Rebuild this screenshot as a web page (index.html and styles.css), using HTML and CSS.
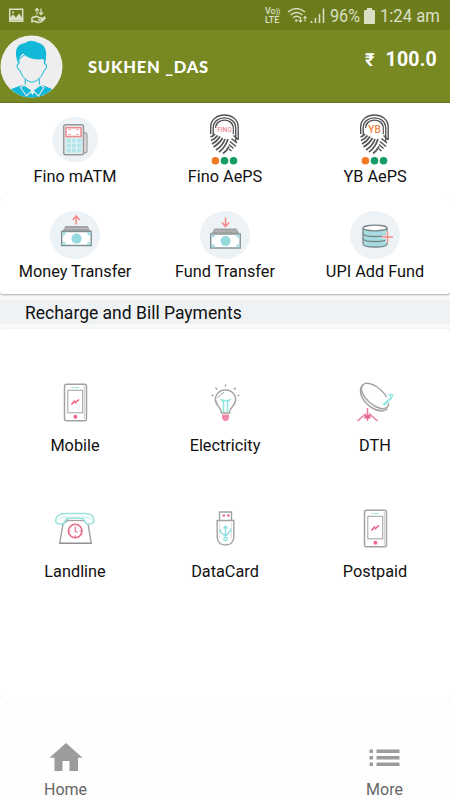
FILE: index.html
```html
<!DOCTYPE html>
<html lang="en">
<head>
<meta charset="utf-8">
<title>Recharge and Bill Payments</title>
<link rel="stylesheet" href="styles.css">
</head>
<body>
<svg class="defs" width="0" height="0">
  <symbol id="phone" viewBox="0 0 48 44">
    <g fill="none" stroke="#a2a2a2"><rect x="13.5" y="3.3" width="22" height="36.5" rx="2" stroke-width="1.5"/><rect x="16.8" y="9.3" width="14.9" height="22.5"/><path d="M33.4 5v33" stroke="#cfcfcf"/></g>
    <path d="M20.5 6.600h1.500m1 0h4.500" stroke="#8ee0da" fill="none"/>
    <path d="M20.500 23.500l3.500-4M24.500 22.500v-1l3.500-3" stroke="#e9587d" stroke-width="1.500" fill="none"/>
    <circle cx="24.400" cy="35.700" r="2" fill="#ed6a8a"/>
  </symbol>
  <symbol id="print" viewBox="0 0 60 58">
    <g fill="none" stroke="#55555a" stroke-width="1.400">
      <path d="M15.700 24v-7c0-16 27.500-16 27.500 0v13"/>
      <path d="M18.200 25v-7c0-13.500 22.500-13.500 22.500 0v14"/>
      <path d="M20.700 18c0-10.500 17.500-10.500 17.500 0v6"/>
      <path d="M15.500 27q3-1 4.500-3M16 30.500q4-1.500 6.500-5M17 34q5-2.500 8-7.500M18.500 37q6-3.500 9-9M21 40q6.500-4 9-11M24 42q6-4 9-13M28 43.500q4-3 6-7" stroke-width="1.700"/>
      <path d="M34 34.500l4.500 4M35 31.500l6 5M36.500 28.500l5.500 4.500M38.500 25.500l4.500 4M34 39l2.500 2" stroke-width="1.500"/>
    </g>
    <rect x="21.500" y="15" width="16" height="10" rx="2" fill="#fff"/>
    <circle cx="20.400" cy="50.700" r="3.800" fill="#f27a22"/><circle cx="29.500" cy="50.700" r="3.800" fill="#159b63"/><circle cx="38.500" cy="50.700" r="3.800" fill="#159b63"/>
  </symbol>
  <symbol id="cash" viewBox="0 0 32 22">
    <path d="M5 1h22l3 5H2z" fill="#a3a3a3"/><path d="M4 3.500h24" stroke="#bbb"/>
    <rect x="1.200" y="6.500" width="29.500" height="14" fill="#fff" stroke="#7e8e91" stroke-width="1.400"/>
    <path d="M2 11V7.200h4q-1 3-4 3.800zm28 0V7.200h-4q1 3 4 3.800zM2 16v3.800h4q-1-3-4-3.800zm28 0v3.800h-4q1-3 4-3.800z" fill="#a8dfe2"/>
    <circle cx="16" cy="13.600" r="5" fill="#96dade"/>
  </symbol>
</svg>

<div class="status">
  <svg class="status-left" width="36" height="20" viewBox="0 0 36 20" fill="none" stroke="#dbe0c5" stroke-width="1.500">
    <path d="M1.700 3.200h13v12h-13z"/><path d="M2 14.500v-3l3-3 3 3 3-4 3 4v3z" fill="#dbe0c5" stroke="none"/><circle cx="5" cy="6.500" r="1" fill="#dbe0c5" stroke="none"/>
    <path d="M29 8.500v-6m-2 2.200l2-2.200 2 2.200M33 2.500v6m-2-2.200l2 2.200 2-2.200" stroke-width="1.200"/>
    <path d="M24 11.300h2q3-2 5 .4h3M30 14h3l4-3.500M24 16.500v-5.200m0 4h3q4 2.500 7.500-.3l3-3.500" stroke-width="1.600"/>
  </svg>
  <div class="volte"><span>Vo<i>))</i></span><span>LTE</span></div>
  <svg class="signal" width="40" height="20" viewBox="0 0 40 20" fill="none" stroke="#dbe0c5" stroke-width="1.500">
    <path d="M1 6q8.500-7 17 0M3.500 9q6-5 12 0M6 11.800q3.500-3 7 0"/><circle cx="9.300" cy="14.500" r="1.200" fill="#dbe0c5" stroke="none"/>
    <path d="M13.500 11v5m-1.700-1.800l1.700 1.800 1.700-1.800M18 15.500v-5m-1.500 1.700l1.500-1.700 1.500 1.700" stroke-width="1.100"/>
    <path d="M24.500 17v-2M28.500 17v-5M32.500 17V8M36.500 17V2.500"/>
  </svg>
  <span class="percent">96%</span>
  <svg class="battery" width="11" height="16" viewBox="0 0 11 16"><path d="M3 0h5v2h2q1 0 1 1v12q0 1-1 1H1q-1 0-1-1V3q0-1 1-1h2z" fill="#dbe0c5"/></svg>
  <span class="clock">1:24 am</span>
</div>

<header class="header">
  <svg class="avatar" width="63" height="63" viewBox="0 0 63 63">
    <circle cx="31.500" cy="31.500" r="31" fill="#eee"/>
    <path d="M11 54.500q4-2.500 12-4.500h18q8 2 11 4.500Q43 62.500 31.500 62.500T11 54.500z" fill="#12b8d7"/>
    <path d="M25 42v7.500L32.500 60l7-10.500V42z" fill="#eee"/>
    <path d="M25.200 44v5.500M39.300 44v5.500" stroke="#12b8d7" fill="none"/>
    <path d="M24 50l-3.500 2.500L26.500 61l6-6 6 6 5.500-8.500L40.500 50l-8 5.500z" fill="#12b8d7" stroke="#eee" stroke-width="1.100"/>
    <path d="M19 24v5q-2-1-2 2 .5 4 3 4.500c2 7 8 11.500 12 11.500s10-4.500 12-11.500q2.500-.5 2.500-4.500 0-3-2-2v-6L31 15z" fill="#eee" stroke="#12b8d7"/>
    <path d="M18 28.500Q11.500 10 25 8q6-4 12.500-.5 12 3 7.500 21-1.500-3-1.500-4.500-13 2-20.500-5.500-4 3-5 10z" fill="#12b8d7"/>
  </svg>
  <h1 class="user">SUKHEN _DAS</h1>
  <div class="balance"><span class="rupee">₹</span><span>100.0</span></div>
</header>

<main>
  <section class="services first">
    <div class="tile">
      <svg width="60" height="58" viewBox="0 0 60 58"><circle cx="30" cy="29.500" r="22.700" fill="#edf2f6"/>
        <path d="M38.500 23h2q1.500 0 1.500 2v16q0 2-3.500 2" fill="#ddd" stroke="#a5a5a5" stroke-width="1.300"/>
        <rect x="18.700" y="14.700" width="19.800" height="30" rx="2" fill="#e2eaed" stroke="#9a9a9a" stroke-width="1.500"/>
        <rect x="21" y="17.700" width="15" height="8.800" fill="#fff" stroke="#ee8a8c" stroke-width="1.500"/><path d="M23 19.700h3m5 0h3M23 24.500h3m5 0h3" stroke="#f3aaa9"/>
        <rect x="21.500" y="28.500" width="15" height="14" fill="#b3e5ea"/><path d="M26.500 28.500v14m5-14v14M21.500 33h15m-15 5h15" stroke="#e4f4f6"/>
      </svg><span>Fino mATM</span></div>
    <div class="tile">
      <svg width="60" height="58" viewBox="0 0 60 58"><use href="#print"/><text class="print-text fino" x="29.500" y="21.500">FINO</text></svg><span>Fino AePS</span></div>
    <div class="tile">
      <svg width="60" height="58" viewBox="0 0 60 58"><use href="#print"/><text class="print-text yb" x="29.500" y="22.500">YB</text></svg><span>YB AePS</span></div>
  </section>

  <section class="services second">
    <div class="tile">
      <svg width="60" height="56" viewBox="0 0 60 56"><ellipse cx="30" cy="28" rx="25" ry="24" fill="#edf2f6"/><use href="#cash" x="15.500" y="18" width="32" height="22"/><path d="M31.200 17.500V9m-3.500 4l3.500-4 3.500 4" fill="none" stroke="#f28b89" stroke-width="1.500"/></svg><span>Money Transfer</span></div>
    <div class="tile">
      <svg width="60" height="56" viewBox="0 0 60 56"><ellipse cx="30" cy="28" rx="25" ry="24" fill="#edf2f6"/><use href="#cash" x="14.500" y="20.500" width="32" height="22"/><path d="M30.500 10.500v9m-3.500-4l3.500 4 3.500-4" fill="none" stroke="#f28b89" stroke-width="1.500"/></svg><span>Fund Transfer</span></div>
    <div class="tile">
      <svg width="60" height="56" viewBox="0 0 60 56"><ellipse cx="30" cy="28" rx="25" ry="24" fill="#edf2f6"/>
        <path d="M18 21v16c0 4 24 4 24 0V21" fill="#a6dce0" stroke="#7b8689" stroke-width="1.300"/><path d="M18 26.500c0 4 24 4 24 0M18 31.500c0 4 24 4 24 0" fill="none" stroke="#7b8689" stroke-width="1.300"/>
        <ellipse cx="30" cy="21" rx="12" ry="2.800" fill="#fff" stroke="#7b8689" stroke-width="1.300"/>
        <path d="M37 30h11m-5.500-5.500v11" stroke="#edf2f6" stroke-width="3.500"/><path d="M37 30h11m-5.500-5.500v11" stroke="#f28b89" stroke-width="1.400"/></svg><span>UPI Add Fund</span></div>
  </section>

  <h2 class="band">Recharge and Bill Payments</h2>

  <section class="bills">
    <div class="tile"><svg width="48" height="44"><use href="#phone"/></svg><span>Mobile</span></div>
    <div class="tile"><svg width="48" height="44" viewBox="0 0 48 44" fill="none">
      <path d="M20.500 32q0-3.500-3-6.500c-7-8-1-16.500 7-16.500s14 8.500 7 16.500q-3 3-3 6.500z" stroke="#a2a2a2" stroke-width="1.500"/><path d="M17 17q2-4.500 6-5.500m-7 8v2" stroke="#aaa"/>
      <path d="M10.500 14l2 .8M14.500 6.800l1.500 1.700M24.500 3.500v2M34.500 6.800L33 8.500M38.500 14l-2 .8" stroke="#999" stroke-width="1.300"/>
      <path d="M22.500 31V21l-2-2 4.500.8 3.500-.8-2 2v10" stroke="#8ee7df" stroke-width="1.500"/><path d="M21 33.500h7v4l-2 2.500h-3l-2-2.500z" fill="#f48dac"/><path d="M21.500 35.500h6" stroke="#e37f9f"/>
    </svg><span>Electricity</span></div>
    <div class="tile"><svg width="48" height="44" viewBox="0 0 48 44" fill="none">
      <path d="M12 4c-6 5-.5 17 8.500 22.500q10 6 16 1.500" stroke="#a2a2a2" stroke-width="1.500"/><ellipse cx="24" cy="15" rx="16.500" ry="8.500" transform="rotate(42 24 15)" stroke="#a2a2a2" stroke-width="1.400"/>
      <path d="M33.500 22.500l6-7" stroke="#fff" stroke-width="5"/><path d="M32 23.500l7.500-6.500v-3l-3-.5M33 24.500l7-7 2-3.500-3-1" stroke="#8ee7e3" stroke-width="1.200"/>
      <path d="M16.500 27v13M15 32.500L6.500 40M18 32.500l8.500 7.500" stroke="#ea7d9e" stroke-width="1.500"/><path d="M14 34h5.500v3.500H13z" fill="#e86c91"/>
    </svg><span>DTH</span></div>
    <div class="tile"><svg width="48" height="44" viewBox="0 0 48 44" fill="none">
      <path d="M16 12v2l-4 3-3 17.500M33 12v2l4 3 3 17.500" stroke="#a2a2a2" stroke-width="1.400"/><path d="M9 34.500v1.700h31v-1.700" stroke="#909090" stroke-width="1.600"/><path d="M16 13.500h17" stroke="#a2a2a2" stroke-width="1.300"/>
      <path d="M16 11.500l-3.500 5q-5 1.500-7.500-1-1.500-9 10-9h19q10 0 8.500 9-3 2.500-7.500 1L32 11.500q-8-1-16 0z" fill="#fff" stroke="#98e2dd" stroke-width="1.600"/><path d="M7 13q2-3 8-3h18q6 0 8 3" stroke="#bcefeb"/>
      <circle cx="24.200" cy="24" r="6.800" stroke="#e8698a" stroke-width="1.600"/><path d="M24.200 19.500v4.800l2.500 1M18 24h1.500m9 0H30M24.200 28.500v2" stroke="#e8698a" stroke-width="1.100"/>
    </svg><span>Landline</span></div>
    <div class="tile"><svg width="48" height="44" viewBox="0 0 48 44" fill="none">
      <path d="M18.500 13V5h12v8M16.200 13.500h16.600v17q-1 7.500-8.300 7.500t-8.300-7.500z" stroke="#a2a2a2" stroke-width="1.400"/><path d="M18.500 14v17m12-17v17" stroke="#e2e2e2"/>
      <path d="M21.500 8.500h2.500m2 0h2.500" stroke="#ed6283" stroke-width="2"/><path d="M24.500 30V19m-2 2.500l2-2.500 2 2.500M19.500 22v3l5 4 5-5v-2.500" stroke="#8ae2df" stroke-width="1.400"/><circle cx="24.500" cy="32" r="1.700" stroke="#8ae2df" stroke-width="1.200"/>
    </svg><span>DataCard</span></div>
    <div class="tile"><svg width="48" height="44"><use href="#phone"/></svg><span>Postpaid</span></div>
  </section>
</main>

<nav class="nav">
  <div class="nav-item"><svg width="34" height="30" viewBox="0 0 34 30"><path d="M17 1l16.500 14.700H29V29h-8.500V19h-7v10H5.500V15.700H.5z" fill="#9c9c9c"/></svg><span>Home</span></div>
  <div class="nav-item"><svg width="34" height="30" viewBox="0 0 34 30"><path d="M1.500 7.500h3.500v3.500H1.500zm7 0h23V11h-23zM1.500 14h3.500v3.500H1.500zm7 0h23v3.500h-23zM1.500 20.500h3.500V24H1.500zm7 0h23V24h-23z" fill="#9c9c9c"/></svg><span>More</span></div>
</nav>
</body>
</html>
```
FILE: styles.css
```css
* { box-sizing: border-box; }
body { margin: 0; width: 450px; height: 800px; overflow: hidden; display: flex; flex-direction: column; background: #fefefe; color: #111; font-family: Roboto, "Liberation Sans", sans-serif; font-size: 16.3px; }
svg { display: block; flex: none; }
.defs { position: absolute; }

.status { height: 30px; flex: none; display: flex; align-items: center; padding: 1px 10px 0 8px; background: #6c7b1b; color: #dbe0c5; }
.status-left { margin-right: auto; overflow: visible; }
.volte { display: flex; flex-direction: column; width: 17px; margin-right: 5px; font-size: 9px; font-weight: 500; line-height: 8px; }
.volte i { font-style: normal; font-size: 7px; letter-spacing: -0.5px; }
.signal { margin-right: 3px; }
.percent, .clock { font-size: 19px; line-height: 28px; white-space: nowrap; transform-origin: left; }
.percent { width: 30px; transform: scaleX(.85); }
.battery { margin: 0 5px 0 4px; }
.clock { width: 60px; transform: scaleX(.875); }

.header { height: 73px; flex: none; display: flex; background: #788923; border-bottom: 1px solid #66751b; color: #fff; }
.avatar { margin-top: 5px; }
.user { margin: 25px 0 0 25px; font: 900 16.5px/24px Lato, sans-serif; letter-spacing: .78px; }
.balance { display: flex; gap: 11px; margin: 18px 13px 0 auto; font-size: 19.5px; line-height: 24px; font-weight: 700; letter-spacing: .2px; }
.rupee { font-size: 18px; }

.services { display: grid; grid-template-columns: repeat(3, 150px); background: #fff; }
.tile { display: flex; flex-direction: column; align-items: center; white-space: nowrap; }
.tile span { line-height: 20px; }
.first { height: 95px; padding-top: 7px; }
.first span { margin-top: -1px; }
.second { height: 96px; padding-top: 9px; border-radius: 3px; box-shadow: 0 1px 2px #aaa; clip-path: inset(0 0 -4px 0); }
.second span { margin-top: -1px; }
.print-text { text-anchor: middle; font-family: Roboto, sans-serif; }
.fino { font-size: 6.500px; fill: #ee6c75; }
.yb { font-size: 10px; font-weight: 500; fill: #f18340; }

main { flex: none; background: #f9f9f9; }
.band { height: 24px; margin: 6px 0 5px; padding-left: 25px; background: #eef2f4; font-size: 17.5px; font-weight: 400; line-height: 26px; }
.bills { height: 368px; padding-top: 52px; display: grid; grid-template-columns: repeat(3, 150px); grid-auto-rows: 126px; align-content: start; background: #fff; border-radius: 3px; box-shadow: 0 0 1px #ccc; clip-path: inset(-2px 0 0 0); }
.bills span { margin-top: 11px; }

.nav { flex: 1; display: flex; justify-content: space-between; padding: 45px 32px 0; color: #666; }
.nav-item { width: 67px; display: flex; flex-direction: column; align-items: center; }
.nav-item span { margin-top: 8px; line-height: 20px; font-size: 16px; }
```
